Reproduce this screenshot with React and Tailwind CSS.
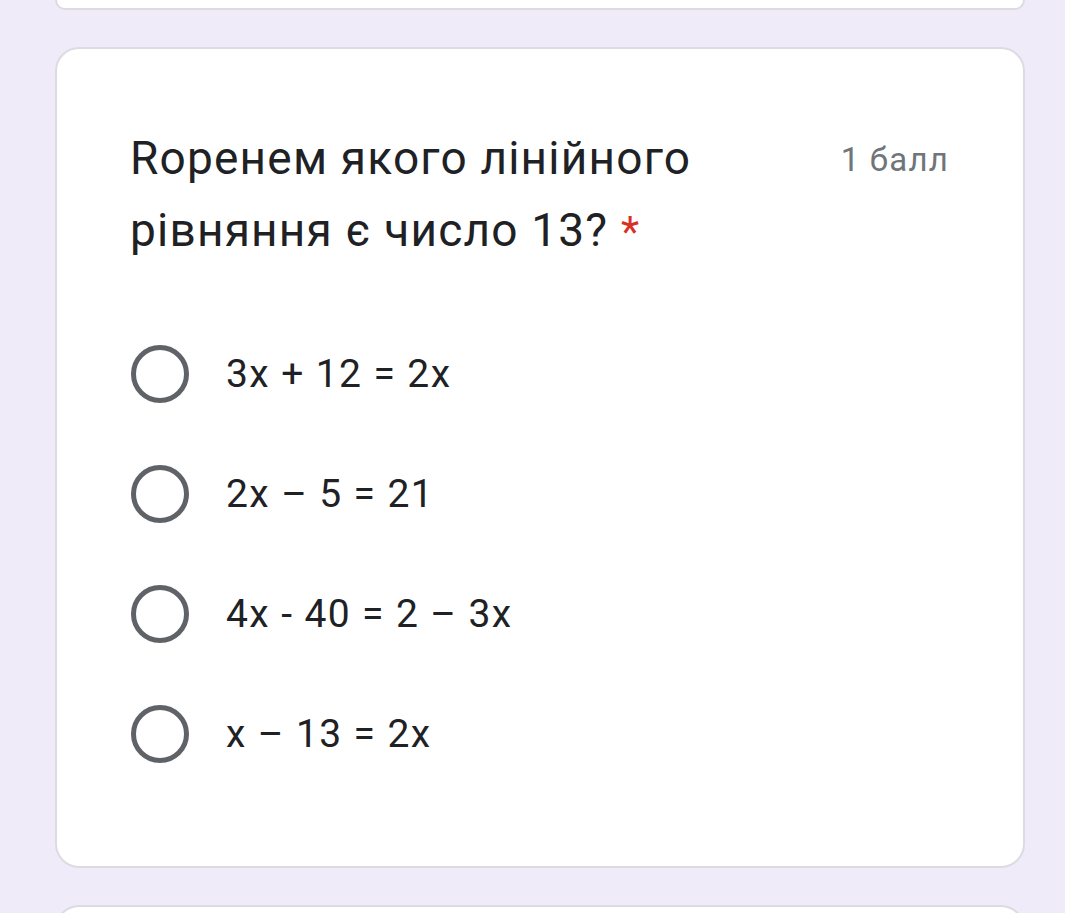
export default function App() {
  const options = ["3x + 12 = 2x", "2x – 5 = 21", "4x - 40 = 2 – 3x", "x – 13 = 2x"];
  return (
    <div className="min-h-[913px] w-[1065px] bg-[#efebf8] overflow-hidden flex flex-col" style={{ fontFamily: "Roboto, 'Noto Sans', sans-serif" }}>
      <div className="ml-[55px] mr-[40px] h-[10px] bg-white border-x-2 border-b-2 border-[#dcdbe2] rounded-b-[24px]" />
      <div className="mt-[37px] ml-[55px] mr-[40px] h-[821px] bg-white border-2 border-[#dcdbe2] rounded-[24px] pl-[73px] pr-[73px] pt-[73px] flex flex-col">
        <div className="flex justify-between items-start">
          <div className="text-[46px] leading-[72px] text-[#202124] tracking-[1.2px] w-[660px]">
            Ropенем якого лінійного рівняння є число 13? <span className="text-[#d93025] text-[42px] leading-[60px]">*</span>
          </div>
          <div className="text-[33px] leading-[76px] text-[#70757a] tracking-[1.2px] mr-[1px]">1 балл</div>
        </div>
        <div className="mt-[48px] flex flex-col">
          {options.map((o) => (
            <div key={o} className="h-[120px] flex items-center">
              <div className="w-[58px] h-[58px] rounded-full border-[5px] border-[#5f6368] ml-[1px]" />
              <div className="ml-[37px] text-[39px] tracking-[1.4px] text-[#202124]">{o}</div>
            </div>
          ))}
        </div>
      </div>
      <div className="mt-[37px] ml-[55px] mr-[40px] h-[40px] bg-white border-x-2 border-t-2 border-[#dcdbe2] rounded-t-[24px]" />
    </div>
  );
}
